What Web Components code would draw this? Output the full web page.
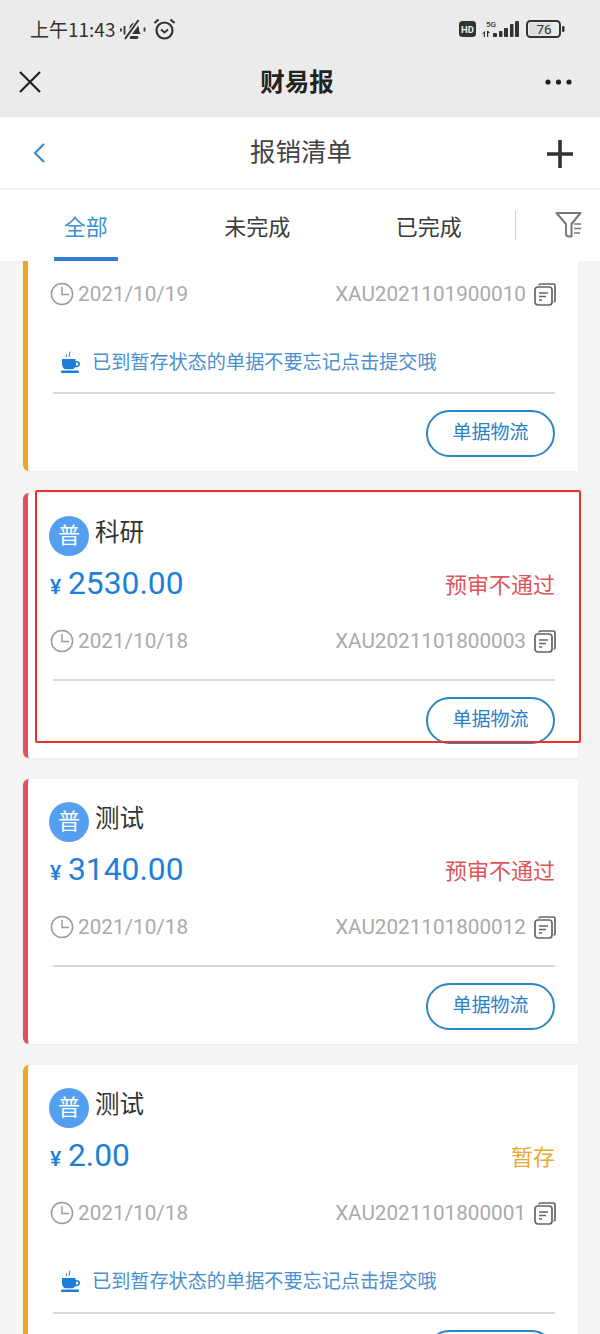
<!DOCTYPE html>
<html lang="zh"><head><meta charset="utf-8"><title>报销清单</title>
<style>
html,body{margin:0;padding:0;background:#f5f5f5}
body{width:600px;height:1334px;overflow:hidden;font-family:"Noto Sans CJK SC","Roboto",sans-serif}
</style></head><body>
<report-app>
  <bill-card kind="draft" cropped no="XAU2021101900010" date="2021/10/19" tip></bill-card>
  <bill-card kind="rejected" marked title-text="科研" amount="2530.00" status="预审不通过" no="XAU2021101800003" date="2021/10/18"></bill-card>
  <bill-card kind="rejected" title-text="测试" amount="3140.00" status="预审不通过" no="XAU2021101800012" date="2021/10/18"></bill-card>
  <bill-card kind="draft" tail title-text="测试" amount="2.00" status="暂存" no="XAU2021101800001" date="2021/10/18" tip></bill-card>
</report-app>
<script>
const def=(name,html)=>{customElements.define(name,class extends HTMLElement{
  constructor(){super();this.attachShadow({mode:'open'}).innerHTML=html;}
});};

def('status-bar',`<style>
:host{display:flex;align-items:center;height:58px;padding:0 35px 0 30px;box-sizing:border-box;color:#333;justify-content:space-between}
.l,.r{display:flex;align-items:center}
.t{font:400 19px/24px "Noto Sans CJK SC",sans-serif;width:88px;white-space:nowrap}
svg{display:block}
</style>
<div class="l"><span class="t">上午11:43</span>
<svg width="26" height="22" viewBox="0 0 26 22" fill="none" stroke="#333" stroke-width="2" style="margin:1px 7px 0 2px"><path d="M8 15c1.200-1 1.500-3 1.500-5.500 0-3 2-5.500 4.500-5.500s5 2.500 5 5.500c0 2.500.5 4.500 2 5.500z" fill="#333" stroke="none"/><path d="M11 18.500h6" stroke-width="2.800" stroke-linecap="round"/><path d="M20 0L6 19" stroke="#ebebeb" stroke-width="5"/><path d="M18.500 1L5 20" stroke-width="2"/><path d="M1 9.500v3M4.500 7v8.500M24.500 8.500v4" stroke-width="1.800"/></svg>
<svg width="23" height="23" viewBox="0 0 23 23" fill="none" stroke="#333" stroke-width="2.200"><circle cx="11.500" cy="12.500" r="8"/><path d="M1.500 5l4-3.500M21.500 5l-4-3.500"/><path d="M8 11.500l3.500 3 3.500-3" stroke-width="1.800"/></svg></div>
<div class="r">
<svg width="17" height="16" viewBox="0 0 17 16"><rect width="17" height="16" rx="3.500" fill="#333"/><text x="8.500" y="11.500" text-anchor="middle" font-family="Roboto,sans-serif" font-weight="700" font-size="9.500" fill="#eee">HD</text></svg>
<svg width="37" height="17" viewBox="0 0 37 17" style="margin:0 7px 0 6px" fill="#333"><text x="4" y="6" font-family="Roboto,sans-serif" font-weight="500" font-size="8" fill="#333">5G</text><path d="M3 10v6H1.800v-3.500L0 12.500zM5 16v-6h1.200l1.800 2H6.200v4z"/><rect x="11" y="12" width="4" height="4" rx=".8"/><rect x="17" y="10" width="3.500" height="6" rx=".8"/><rect x="22" y="7" width="4" height="9" rx=".8"/><rect x="28" y="3" width="3.500" height="13" rx=".8"/><rect x="33" y="0" width="4" height="16" rx=".8"/></svg>
<svg width="39" height="18" viewBox="0 0 39 18"><rect x="1" y="1" width="33" height="16" rx="3.500" fill="none" stroke="#333" stroke-width="2"/><rect x="3" y="3" width="22" height="12" fill="#ddd"/><rect x="36" y="6" width="2.500" height="6" rx="1" fill="#333"/><text x="18" y="14" text-anchor="middle" font-family="Roboto,sans-serif" font-size="13.500" fill="#333">76</text></svg>
</div>`);

def('top-nav',`<style>
:host{display:grid;grid-template-columns:1fr auto 1fr;align-items:center;height:59px;padding:0 24px 11px 18px;box-sizing:border-box;color:#222}
b{font:700 24.500px/34px "Noto Sans CJK SC",sans-serif;margin-top:-2px}
svg{display:block}.d{justify-self:end;margin-right:4px}
</style>
<svg width="24" height="22" viewBox="0 0 24 22" fill="none" stroke="#222" stroke-width="2.200"><path d="M2 1l20 20M22 1L2 21"/></svg>
<b>财易报</b>
<svg class="d" width="27" height="6" viewBox="0 0 27 6" fill="#222"><circle cx="3" cy="3" r="2.600"/><circle cx="13.500" cy="3" r="2.600"/><circle cx="24" cy="3" r="2.600"/></svg>`);

def('sub-header',`<style>
:host{display:grid;grid-template-columns:1fr auto 1fr;align-items:center;height:72px;padding:0 26px 2px 28px;box-sizing:border-box;background:#fff;border-bottom:2px solid #f2f2f2;margin-top:1px}
span{font:400 25.500px/36px "Noto Sans CJK SC",sans-serif;color:#444;margin-top:-4px}
svg{display:block}.b{margin:2px 0 0 5px}.p{justify-self:end;margin-top:3px}
</style>
<svg class="b" width="12" height="20" viewBox="0 0 12 20" fill="none" stroke="#3a8ad0" stroke-width="2.200"><path d="M11 1L2 10l9 9"/></svg>
<span>报销清单</span>
<svg class="p" width="28" height="28" viewBox="0 0 28 28" fill="none" stroke="#333" stroke-width="3.600"><path d="M14 0v28M1 14h26"/></svg>`);

def('tab-bar',`<style>
:host{display:flex;align-items:center;height:71px;background:#fff}
.tab{width:171.500px;height:71px;display:flex;justify-content:center}
.tab span{display:flex;align-items:center;justify-content:center;width:64px;box-sizing:border-box;padding-top:2px;border-bottom:4px solid transparent;font:400 22px/30px "Noto Sans CJK SC",sans-serif;color:#3b3b3b;white-space:nowrap}
.on span{color:#3a8fd0;border-color:#2f80d2}
.sep{width:1px;height:29px;background:#cfcfcf}
svg{display:block;margin:-2px 0 0 39px}
</style>
<div class="tab on"><span>全部</span></div><div class="tab"><span>未完成</span></div><div class="tab"><span>已完成</span></div><i class="sep"></i>
<svg width="28" height="28" viewBox="0 0 28 28" fill="none" stroke="#777" stroke-width="2"><path d="M1.500 2h24l-9 11v12.500h-2.500c-2 0-3-1-3-3V13z" stroke-linejoin="round"/><path d="M19 13h7M19 17.500h7M19 22h6" stroke-width="1.600"/></svg>`);

def('report-app',`<style>
:host{display:block;width:600px;height:1334px;overflow:hidden}
.chrome{background:#ebebeb;height:117px}
.list{display:flex;flex-direction:column;gap:21px;padding:0 22px 0 23px;background:#f5f5f5}
</style>
<div class="chrome"><status-bar></status-bar><top-nav></top-nav></div>
<sub-header></sub-header><tab-bar></tab-bar>
<div class="list"><slot></slot></div>`);

const clock=`<svg width="24" height="24" viewBox="0 0 24 24" fill="none" stroke="#9a9a9a" stroke-width="1.500"><circle cx="12" cy="12" r="10.600"/><path d="M12 5v7.500h7"/></svg>`;
const copy=`<svg class="cp" width="22" height="23" viewBox="0 0 22 23" fill="none" stroke="#666" stroke-width="1.700"><path d="M5 2.500c0-1 .5-1.500 1.500-1.500h13c1 0 1.500.5 1.500 1.500v15c0 1-.5 1.500-1.500 1.500"/><rect x="1" y="4" width="17" height="18" rx="3" fill="#fff"/><path d="M5 10h9M5 13.500h7M5 17h3"/></svg>`;
const cup=`<svg width="20" height="23" viewBox="0 0 20 23" fill="#1c7cd8"><path d="M1 9h13.500v2h1c2.200 0 3.500 1.200 3.500 3s-1.300 3.200-3.500 3.200H14c-.8 1.300-1.800 2-3 2H4.500C2.300 19.200 1 16 1 13z"/><path d="M15 12.500v3.200c1.600 0 2.400-.6 2.400-1.600s-.8-1.600-2.400-1.600z" fill="#fff"/><rect y="20.500" width="18" height="2.500" rx="1"/><path d="M8 7c-1.200-1.500.8-2.500 0-4L9 1c1 2-.8 3.500 0 5zM5 7.500c-.8-1 .4-1.700 0-2.700l.8-1c.6 1.300-.5 2.300 0 3.500z"/></svg>`;

customElements.define('bill-card',class extends HTMLElement{
  constructor(){super();this.attachShadow({mode:'open'});}
  connectedCallback(){
    const g=n=>this.getAttribute(n),cropped=this.hasAttribute('cropped'),tip=this.hasAttribute('tip');
    const head=cropped?'':`
      <div class="head"><span class="ava">普</span><span class="ttl">${g('title-text')}</span></div>
      <div class="money"><span class="amt"><small>¥</small><em>${g('amount')}</em></span><span class="st">${g('status')}</span></div>`;
    this.shadowRoot.innerHTML=`<style>
:host{display:block;width:555px;box-sizing:border-box;background:#fff;border-left:5px solid var(--bar);border-radius:${cropped?'0 0 0 6px':'6px 0 0 6px'};padding:${cropped?'18px':'23px'} 23px 14px 21px;margin-bottom:${cropped?'1px':'0'};box-shadow:0 1px 3px rgba(0,0,0,.04);position:relative;
  --bar:${g('kind')==='draft'?'#f2a51e':'#e6505a'};--st:${g('kind')==='draft'?'#e8a92e':'#e0555a'}}
.head{display:flex;height:40px}
.ava{width:40px;height:40px;border-radius:50%;background:#559ff0;color:#fff;font:400 22px/34px "Noto Sans CJK SC",sans-serif;text-align:center}
.ttl{margin:0 0 0 6px;font:400 24.500px/30px "Noto Sans CJK SC",sans-serif;color:#333}
.money{display:flex;justify-content:space-between;align-items:center;height:40px;margin-top:7px}
.amt{display:flex;align-items:baseline;color:#1f7fd6;margin:4px 0 0 1px}
small{font:500 21px/40px Roboto,sans-serif;width:18px}
em{font:400 31.800px/40px Roboto,sans-serif}
.st{font:400 22px/32px "Noto Sans CJK SC",sans-serif;color:var(--st)}
.when{display:flex;justify-content:space-between;align-items:center;height:30px;margin:${cropped?'0':'23px'} -1px 0 1px;color:#aaa;font:400 20.700px/30px Roboto,sans-serif}
.when>div{display:flex;align-items:center}
.when svg{display:block}
.d{margin-left:4px}
.cp{margin-left:8px}
.tip{display:flex;align-items:center;height:30px;margin:37px 0 0 12px;color:#4a8fd0;font:400 19.150px/30px "Noto Sans CJK SC",sans-serif;white-space:nowrap}
.tip svg{display:block;margin-right:11px}
hr{border:0;height:2px;background:#d9d9d9;margin:${cropped?'16px':tip?'17px':'23px'} 0 0 4px}
.btn{display:flex;justify-content:flex-end;margin-top:16px}
.btn span{width:129px;height:47px;box-sizing:border-box;border:2px solid #2a86c8;border-radius:24px;color:#2a80c4;font:400 19px/37px "Noto Sans CJK SC",sans-serif;text-align:center}
.mark{position:absolute;left:7px;top:-3px;width:546px;height:253px;box-sizing:border-box;border:2px solid #f03030;border-radius:2px;pointer-events:none}
</style>${head}
<div class="when"><div>${clock}<span class="d">${g('date')}</span></div><div><span>${g('no')}</span>${copy}</div></div>
${tip?`<div class="tip">${cup}<span>已到暂存状态的单据不要忘记点击提交哦</span></div>`:''}
<hr><div class="btn"><span>${this.hasAttribute('tail')?'':'单据物流'}</span></div>
${this.hasAttribute('marked')?'<div class="mark"></div>':''}`;
  }
});
</script>
</body></html>
